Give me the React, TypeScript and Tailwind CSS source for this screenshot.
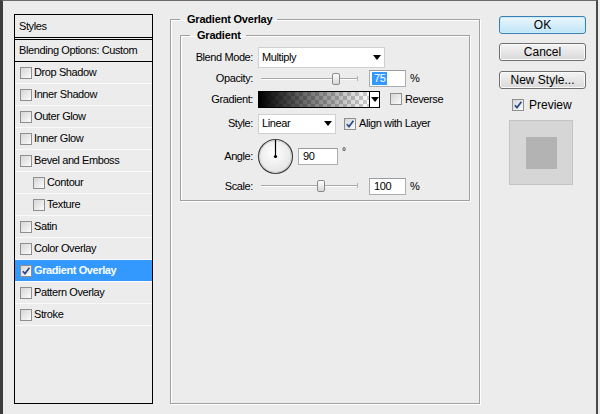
import React from "react";

const LIST: { label: string; indent?: boolean; checked?: boolean; active?: boolean }[] = [
  { label: "Drop Shadow" },
  { label: "Inner Shadow" },
  { label: "Outer Glow" },
  { label: "Inner Glow" },
  { label: "Bevel and Emboss" },
  { label: "Contour", indent: true },
  { label: "Texture", indent: true },
  { label: "Satin" },
  { label: "Color Overlay" },
  { label: "Gradient Overlay", checked: true, active: true },
  { label: "Pattern Overlay" },
  { label: "Stroke" },
];

function Check({ checked }: { checked?: boolean }) {
  return (
    <span className="flex h-[12px] w-[12px] shrink-0 items-center justify-center border border-[#8e8f8f] bg-gradient-to-br from-[#d6d6d6] to-[#fbfbfb]">
      {checked && (
        <svg width="10" height="10" viewBox="0 0 10 10">
          <path d="M1.8 5.2 L4 7.6 L8.4 1.8" fill="none" stroke="#2b4a8a" strokeWidth="1.7" />
        </svg>
      )}
    </span>
  );
}

function Arrow() {
  return (
    <svg width="8" height="5" viewBox="0 0 8 5">
      <path d="M0 0 H8 L4 5 Z" fill="#000" />
    </svg>
  );
}

function Slider({ pos }: { pos: number }) {
  return (
    <div className="relative h-[14px] w-[102px]">
      <div className="absolute left-[3px] right-[2px] top-[6px] h-[1px] bg-[#a9a9a9] shadow-[0_1px_0_#fff]" />
      <div className="absolute right-[2px] top-[4px] h-[5px] w-[1px] bg-[#b5b5b5]" />
      <div
        className="absolute top-[1px] h-[12px] w-[8px] rounded-[2px] border border-[#8b8b8b] bg-gradient-to-b from-[#ffffff] to-[#d8d8d8]"
        style={{ left: pos - 4 }}
      />
    </div>
  );
}

function NumBox({ value, width, selected }: { value: string; width: number; selected?: boolean }) {
  return (
    <div
      className="flex h-[17px] items-center border border-[#abadb3] border-t-[#9a9ca2] bg-white pl-[2px] text-[11px] text-black"
      style={{ width }}
    >
      <span className={selected ? "bg-[#3399ff] px-[2px] leading-[13px] text-white" : "px-[2px]"}>{value}</span>
    </div>
  );
}

function Row({ label, h, children }: { label: string; h: number; children: React.ReactNode }) {
  return (
    <div className="flex items-center" style={{ height: h }}>
      <span className="w-[72px] text-right">{label}</span>
      <div className="ml-[5px] flex items-center">{children}</div>
    </div>
  );
}

function Button({ label, primary }: { label: string; primary?: boolean }) {
  return (
    <button
      className={[
        "flex h-[18px] w-[87px] items-center justify-center rounded-[3px] border text-[12px] leading-none text-black",
        primary
          ? "border-[#3c7fb1] bg-gradient-to-b from-[#eaf6fd] to-[#bfe5f7] shadow-[inset_0_0_0_1px_#c8ecfa]"
          : "border-[#707070] bg-gradient-to-b from-[#f4f4f4] to-[#d9d9d9] shadow-[inset_0_0_0_1px_#fafafa]",
      ].join(" ")}
    >
      {label}
    </button>
  );
}

export default function App() {
  return (
    <div className="h-[414px] w-[600px] bg-[#ececec] font-['Liberation_Sans',Arial,sans-serif] text-[11px] tracking-[-0.4px] text-black">
      <div className="flex h-[414px] w-[598px] border-l-[3px] border-r-2 border-t border-l-[#3d3d3d] border-r-[#4a4a4a] border-t-[#6a6a6a] pl-[11px] pt-[12px]">
        {/* styles list */}
        <div className="mt-[1px] flex h-[390px] w-[139px] flex-col border border-black">
          <div className="flex h-[22px] items-center pl-[4px]">Styles</div>
          <div className="h-[3px] border-y border-black" />
          <div className="flex h-[22px] items-center border-b border-black pl-[4px]">Blending Options: Custom</div>
          {LIST.map((item) => (
            <div
              key={item.label}
              className={[
                "flex h-[22px] items-center border-b border-[#fafafa]",
                item.indent ? "pl-[18px]" : "pl-[5px]",
                item.active ? "bg-[#3399ff] font-bold text-white" : "",
              ].join(" ")}
            >
              <Check checked={item.checked} />
              <span className="ml-[2px]">{item.label}</span>
            </div>
          ))}
        </div>

        {/* gradient overlay settings */}
        <fieldset className="ml-[17px] h-[391px] w-[310px] border border-[#a0a0a0] px-[9px] shadow-[inset_1px_1px_0_#fff,1px_1px_0_#fff]">
          <legend className="pl-[7px] pr-[5px] text-[11px] font-bold leading-[13px] tracking-[-0.2px]">Gradient Overlay</legend>
          <fieldset className="mt-[3px] h-[172px] w-[290px] border border-[#a0a0a0] pt-[4px] shadow-[inset_1px_1px_0_#fff,1px_1px_0_#fff]">
            <legend className="ml-[9px] pl-[7px] pr-[5px] font-bold leading-[13px] tracking-[-0.2px]">Gradient</legend>
            <Row label="Blend Mode:" h={23}>
              <div className="flex h-[21px] w-[127px] items-center justify-between border border-[#d0d0d0] bg-white pl-[3px] pr-[3px]">
                <span>Multiply</span>
                <Arrow />
              </div>
            </Row>
            <Row label="Opacity:" h={19}>
              <Slider pos={78} />
              <div className="ml-[9px]">
                <NumBox value="75" width={37} selected />
              </div>
              <span className="ml-[4px]">%</span>
            </Row>
            <Row label="Gradient:" h={22}>
              <div className="flex h-[17px] w-[122px] border border-black bg-white">
                <svg width="110" height="15" className="block">
                  <defs>
                    <pattern id="ck" width="8" height="8" patternUnits="userSpaceOnUse">
                      <rect width="8" height="8" fill="#ffffff" />
                      <rect width="4" height="4" fill="#cfcfcf" />
                      <rect x="4" y="4" width="4" height="4" fill="#cfcfcf" />
                    </pattern>
                    <linearGradient id="go" x1="0" x2="1" y1="0" y2="0">
                      <stop offset="0" stopColor="#000" stopOpacity="1" />
                      <stop offset="1" stopColor="#000" stopOpacity="0" />
                    </linearGradient>
                  </defs>
                  <rect width="110" height="15" fill="url(#ck)" />
                  <rect width="110" height="15" fill="url(#go)" />
                </svg>
                <div className="flex flex-1 items-center justify-center border-l border-black">
                  <Arrow />
                </div>
              </div>
              <span className="ml-[10px]">
                <Check />
              </span>
              <span className="ml-[3px]">Reverse</span>
            </Row>
            <Row label="Style:" h={27}>
              <div className="flex h-[20px] w-[78px] items-center justify-between border border-[#d0d0d0] bg-white pl-[3px] pr-[3px]">
                <span>Linear</span>
                <Arrow />
              </div>
              <span className="ml-[8px]">
                <Check checked />
              </span>
              <span className="ml-[3px]">Align with Layer</span>
            </Row>
            <Row label="Angle:" h={38}>
              <svg width="37" height="37" viewBox="0 0 37 37" className="-ml-[1px] block">
                <defs>
                  <radialGradient id="dial" cx="0.45" cy="0.4" r="0.6">
                    <stop offset="0" stopColor="#ffffff" />
                    <stop offset="1" stopColor="#e4e4e4" />
                  </radialGradient>
                </defs>
                <circle cx="18.5" cy="18.5" r="17" fill="url(#dial)" stroke="#3f3f3f" strokeWidth="1.2" />
                <circle cx="18.5" cy="18.5" r="15.8" fill="none" stroke="#c9c9c9" strokeWidth="0.8" />
                <line x1="18.5" y1="18.5" x2="18.5" y2="2" stroke="#000" strokeWidth="1.2" />
                <circle cx="18.5" cy="18.5" r="1.6" fill="#000" />
              </svg>
              <div className="ml-[4px]">
                <NumBox value="90" width={40} />
              </div>
              <span className="mb-[10px] ml-[4px] text-[10px]">°</span>
            </Row>
            <Row label="Scale:" h={22}>
              <Slider pos={63} />
              <div className="ml-[9px]">
                <NumBox value="100" width={37} />
              </div>
              <span className="ml-[4px]">%</span>
            </Row>
          </fieldset>
        </fieldset>

        {/* buttons */}
        <div className="ml-[19px] mt-[3px] flex w-[87px] flex-col tracking-normal">
          <Button label="OK" primary />
          <div className="mt-[9px]">
            <Button label="Cancel" />
          </div>
          <div className="mt-[10px]">
            <Button label="New Style..." />
          </div>
          <div className="ml-[13px] mt-[7px] flex items-center text-[12px]">
            <Check checked />
            <span className="ml-[5px]">Preview</span>
          </div>
          <div className="ml-[10px] mt-[6px] flex h-[65px] w-[64px] items-center justify-center border border-[#c4c4c4] bg-[#d6d6d6]">
            <div className="h-[32px] w-[31px] bg-[#b3b3b3]" />
          </div>
        </div>
      </div>
    </div>
  );
}
